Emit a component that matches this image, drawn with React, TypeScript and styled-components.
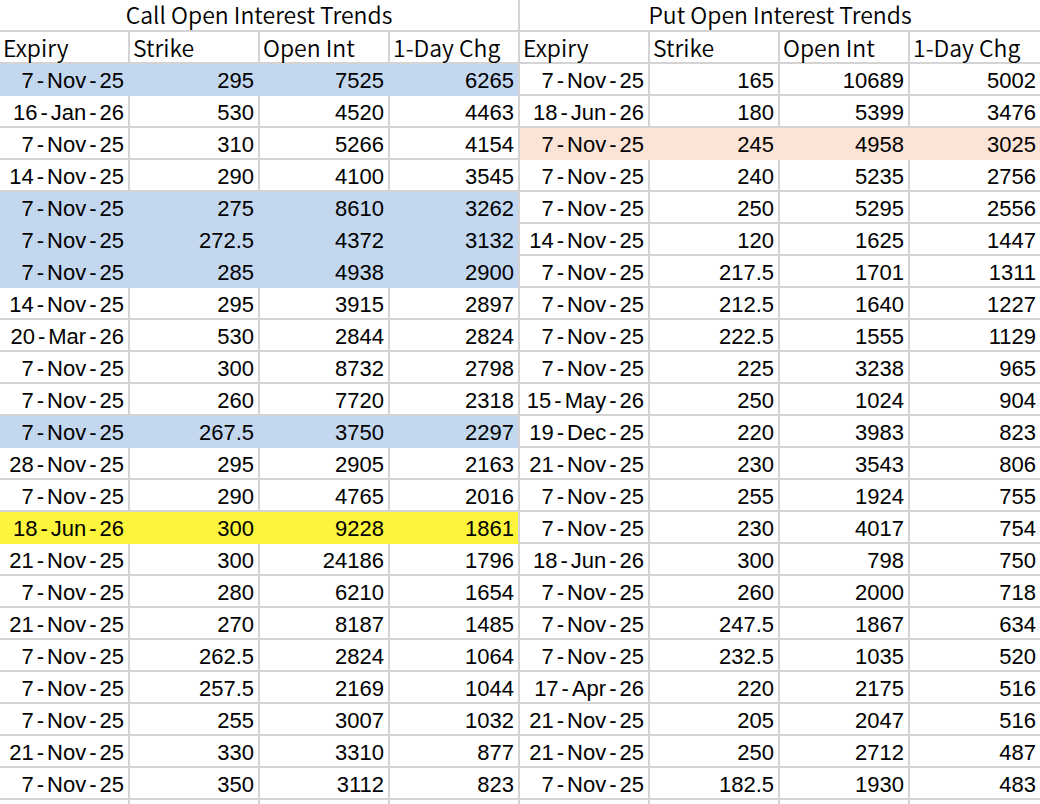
import React from "react";
import styled, { createGlobalStyle } from "styled-components";

type Fill = "blue" | "peach" | "yellow";

interface IRow {
  expiry: string;
  strike: string;
  openInt: string;
  chg: string;
  fill?: Fill;
}

const fills: Record<Fill, string> = {
  blue: "#c3d7ef",
  peach: "#fbe4d6",
  yellow: "#fcf53c",
};

const calls: IRow[] = [
  { expiry: "7-Nov-25", strike: "295", openInt: "7525", chg: "6265", fill: "blue" },
  { expiry: "16-Jan-26", strike: "530", openInt: "4520", chg: "4463" },
  { expiry: "7-Nov-25", strike: "310", openInt: "5266", chg: "4154" },
  { expiry: "14-Nov-25", strike: "290", openInt: "4100", chg: "3545" },
  { expiry: "7-Nov-25", strike: "275", openInt: "8610", chg: "3262", fill: "blue" },
  { expiry: "7-Nov-25", strike: "272.5", openInt: "4372", chg: "3132", fill: "blue" },
  { expiry: "7-Nov-25", strike: "285", openInt: "4938", chg: "2900", fill: "blue" },
  { expiry: "14-Nov-25", strike: "295", openInt: "3915", chg: "2897" },
  { expiry: "20-Mar-26", strike: "530", openInt: "2844", chg: "2824" },
  { expiry: "7-Nov-25", strike: "300", openInt: "8732", chg: "2798" },
  { expiry: "7-Nov-25", strike: "260", openInt: "7720", chg: "2318" },
  { expiry: "7-Nov-25", strike: "267.5", openInt: "3750", chg: "2297", fill: "blue" },
  { expiry: "28-Nov-25", strike: "295", openInt: "2905", chg: "2163" },
  { expiry: "7-Nov-25", strike: "290", openInt: "4765", chg: "2016" },
  { expiry: "18-Jun-26", strike: "300", openInt: "9228", chg: "1861", fill: "yellow" },
  { expiry: "21-Nov-25", strike: "300", openInt: "24186", chg: "1796" },
  { expiry: "7-Nov-25", strike: "280", openInt: "6210", chg: "1654" },
  { expiry: "21-Nov-25", strike: "270", openInt: "8187", chg: "1485" },
  { expiry: "7-Nov-25", strike: "262.5", openInt: "2824", chg: "1064" },
  { expiry: "7-Nov-25", strike: "257.5", openInt: "2169", chg: "1044" },
  { expiry: "7-Nov-25", strike: "255", openInt: "3007", chg: "1032" },
  { expiry: "21-Nov-25", strike: "330", openInt: "3310", chg: "877" },
  { expiry: "7-Nov-25", strike: "350", openInt: "3112", chg: "823" },
];

const puts: IRow[] = [
  { expiry: "7-Nov-25", strike: "165", openInt: "10689", chg: "5002" },
  { expiry: "18-Jun-26", strike: "180", openInt: "5399", chg: "3476" },
  { expiry: "7-Nov-25", strike: "245", openInt: "4958", chg: "3025", fill: "peach" },
  { expiry: "7-Nov-25", strike: "240", openInt: "5235", chg: "2756" },
  { expiry: "7-Nov-25", strike: "250", openInt: "5295", chg: "2556" },
  { expiry: "14-Nov-25", strike: "120", openInt: "1625", chg: "1447" },
  { expiry: "7-Nov-25", strike: "217.5", openInt: "1701", chg: "1311" },
  { expiry: "7-Nov-25", strike: "212.5", openInt: "1640", chg: "1227" },
  { expiry: "7-Nov-25", strike: "222.5", openInt: "1555", chg: "1129" },
  { expiry: "7-Nov-25", strike: "225", openInt: "3238", chg: "965" },
  { expiry: "15-May-26", strike: "250", openInt: "1024", chg: "904" },
  { expiry: "19-Dec-25", strike: "220", openInt: "3983", chg: "823" },
  { expiry: "21-Nov-25", strike: "230", openInt: "3543", chg: "806" },
  { expiry: "7-Nov-25", strike: "255", openInt: "1924", chg: "755" },
  { expiry: "7-Nov-25", strike: "230", openInt: "4017", chg: "754" },
  { expiry: "18-Jun-26", strike: "300", openInt: "798", chg: "750" },
  { expiry: "7-Nov-25", strike: "260", openInt: "2000", chg: "718" },
  { expiry: "7-Nov-25", strike: "247.5", openInt: "1867", chg: "634" },
  { expiry: "7-Nov-25", strike: "232.5", openInt: "1035", chg: "520" },
  { expiry: "17-Apr-26", strike: "220", openInt: "2175", chg: "516" },
  { expiry: "21-Nov-25", strike: "205", openInt: "2047", chg: "516" },
  { expiry: "21-Nov-25", strike: "250", openInt: "2712", chg: "487" },
  { expiry: "7-Nov-25", strike: "182.5", openInt: "1930", chg: "483" },
];

const headers = ["Expiry", "Strike", "Open Int", "1-Day Chg"];

const GRID = "#d4d4d4";

const GlobalStyle = createGlobalStyle`
  html, body {
    margin: 0;
    padding: 0;
    background: #fff;
    overflow: hidden;
  }
`;

const Sheet = styled.div`
  display: grid;
  grid-template-columns: repeat(8, 130px);
  grid-auto-rows: 32px;
  width: 1040px;
  color: #000;
`;

const Cell = styled.div<{ $fill?: Fill; $last?: boolean; $edge?: boolean }>`
  box-sizing: border-box;
  display: flex;
  align-items: flex-end;
  white-space: nowrap;
  background: ${(p) => (p.$fill ? fills[p.$fill] : "#fff")};
  border-bottom: 2px solid ${(p) => (p.$fill ? fills[p.$fill] : GRID)};
  border-right: ${(p) =>
    p.$edge
      ? "none"
      : `2px solid ${p.$fill && !p.$last ? fills[p.$fill] : GRID}`};
`;

const TitleCell = styled(Cell)`
  grid-column: span 4;
  justify-content: center;
  font-family: "Noto Sans CJK SC", "Liberation Sans", sans-serif;
  font-weight: 350;
  font-size: 23px;
  line-height: 28px;
  padding-bottom: 2px;
`;

const HeaderCell = styled(Cell)`
  justify-content: flex-start;
  padding-left: 3px;
  padding-bottom: 1px;
  font-family: "Noto Sans CJK SC", "Liberation Sans", sans-serif;
  font-weight: 350;
  font-size: 23px;
  line-height: 28px;
`;

const ValueCell = styled(Cell)`
  justify-content: flex-end;
  padding-right: 4px;
  font-family: "Liberation Sans", Arial, sans-serif;
  font-size: 22px;
  line-height: 26px;
`;

const Dash = styled.span`
  margin: 0 3px;
`;

const DateText: React.FC<{ value: string }> = ({ value }) => {
  const parts = value.split("-");
  return (
    <span>
      {parts.map((part, i) => (
        <React.Fragment key={i}>
          {i > 0 && <Dash>-</Dash>}
          {part}
        </React.Fragment>
      ))}
    </span>
  );
};

const rowCells = (row: IRow, side: "call" | "put", idx: number) => {
  const values = [row.strike, row.openInt, row.chg];
  return (
    <React.Fragment key={`${side}-${idx}`}>
      <ValueCell $fill={row.fill}>
        <DateText value={row.expiry} />
      </ValueCell>
      {values.map((v, i) => (
        <ValueCell
          key={i}
          $fill={row.fill}
          $last={i === 2}
          $edge={side === "put" && i === 2}
        >
          {v}
        </ValueCell>
      ))}
    </React.Fragment>
  );
};

const App: React.FC = () => {
  return (
    <>
      <GlobalStyle />
      <Sheet>
        <TitleCell>Call Open Interest Trends</TitleCell>
        <TitleCell $edge>Put Open Interest Trends</TitleCell>
        {[...headers, ...headers].map((h, i) => (
          <HeaderCell key={i} $edge={i === 7}>
            {h}
          </HeaderCell>
        ))}
        {calls.map((call, i) => (
          <React.Fragment key={i}>
            {rowCells(call, "call", i)}
            {rowCells(puts[i], "put", i)}
          </React.Fragment>
        ))}
        {Array.from({ length: 8 }).map((_, i) => (
          <Cell key={`blank-${i}`} $edge={i === 7} />
        ))}
      </Sheet>
    </>
  );
};

export default App;
